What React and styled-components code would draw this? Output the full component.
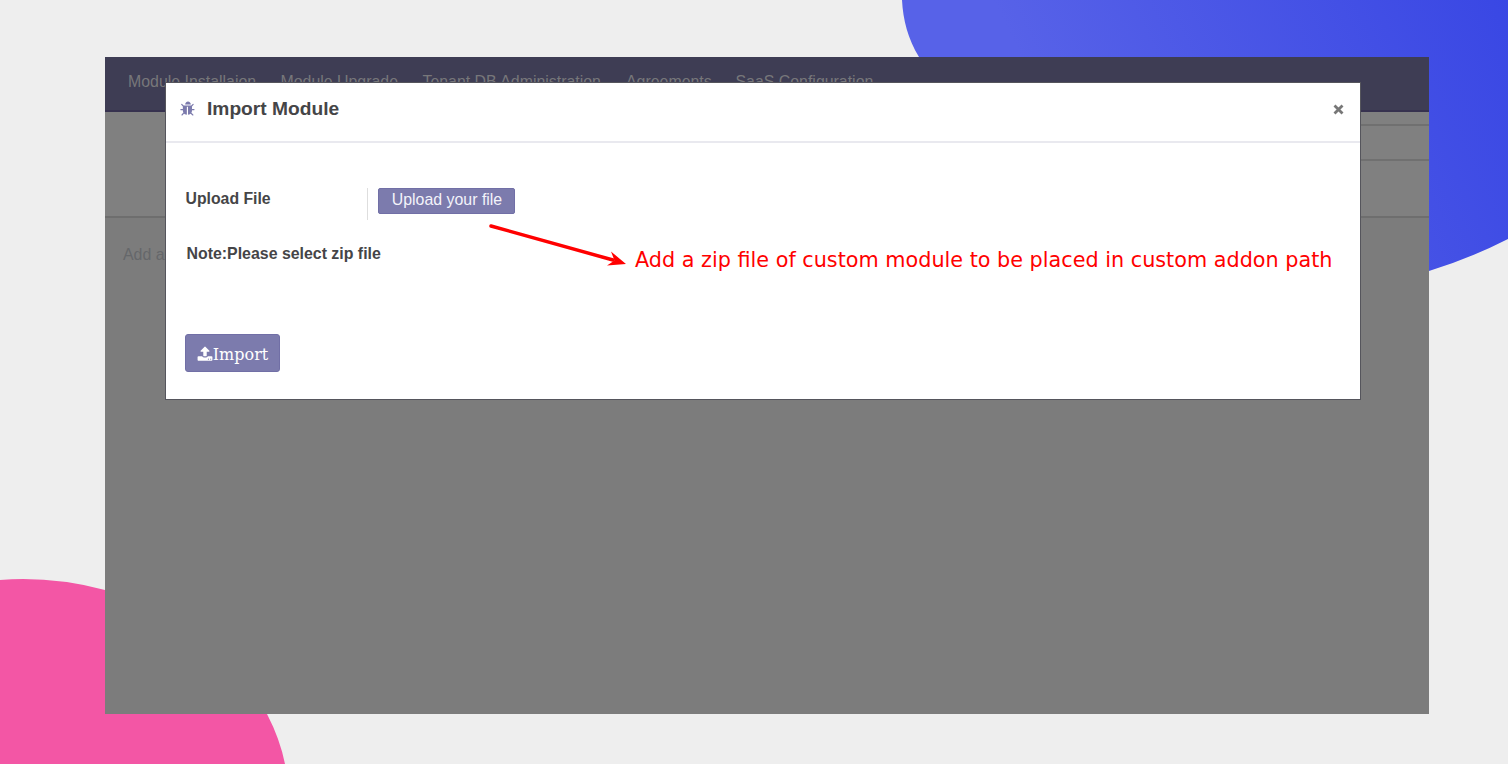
import React from 'react';
import styled, { createGlobalStyle } from 'styled-components';

const Global = createGlobalStyle`
  * { box-sizing: border-box; }
  body { margin: 0; overflow: hidden; }
`;

const Page = styled.div`
  position: relative;
  width: 1508px;
  height: 764px;
  padding: 57px 79.5px 50px 105px;
  background: #eeeeee;
  overflow: hidden;
  font-family: 'Liberation Sans', Arial, sans-serif;
`;

const Shapes = styled.svg`
  position: absolute;
  inset: 0;
`;

const Screen = styled.div`
  position: relative;
  height: 657px;
  background: #7c7c7c;
  overflow: hidden;
`;

const NavBar = styled.nav`
  display: flex;
  gap: 24px;
  height: 55px;
  padding: 16px 23px 0;
  background: #3e3d54;
  border-bottom: 2px solid #37324f;
  color: #77777a;
  font-size: 15.9px;
  line-height: 18px;
  white-space: nowrap;
`;

const NavItem = styled.span`
  width: ${(p) => p.$width}px;
`;

const ControlPanel = styled.div`
  height: 106px;
  background: #808080;
  border-bottom: 2px solid #6e6e6e;
`;

const Strip = styled.div`
  height: ${(p) => p.$height}px;
  margin-left: 61px;
  border-bottom: 2px solid #707070;
`;

const AddHint = styled.div`
  padding: 28px 18px;
  color: #65676a;
  font-size: 15.9px;
  line-height: 18px;
`;

const Dialog = styled.section`
  position: absolute;
  top: 25px;
  left: 60px;
  width: 1196px;
  height: 318px;
  background: #fff;
  border: 1px solid #55555c;
  color: #454547;
`;

const DialogHeader = styled.header`
  display: flex;
  align-items: center;
  height: 60px;
  padding: 0 16px 6px 14px;
  border-bottom: 2px solid #e9e9ef;
`;

const Title = styled.h1`
  flex: 1;
  margin: 0 0 0 11px;
  font-size: 19.2px;
  line-height: 24px;
`;

const Field = styled.div`
  display: flex;
  height: 32px;
  margin: 45px 0 0 19.5px;
`;

const Label = styled.label`
  width: 182.5px;
  border-right: 1.5px solid #dedede;
  font-size: 15.8px;
  font-weight: 700;
  line-height: 21px;
`;

const UploadButton = styled.button`
  width: 137px;
  height: 26px;
  margin-left: 10px;
  padding: 0 0 2px 1px;
  border: 1px solid #716fa6;
  border-radius: 2px;
  background: #7c7bad;
  color: #f3f3fa;
  font: 15.9px 'Liberation Sans', Arial, sans-serif;
`;

const Note = styled.p`
  margin: 25px 0 0 20.5px;
  font-size: 15.9px;
  font-weight: 700;
  line-height: 18px;
`;

const ImportButton = styled.button`
  display: flex;
  align-items: center;
  justify-content: center;
  width: 95px;
  height: 38px;
  margin: 71px 0 0 19px;
  padding: 2px 0 0;
  border: 1px solid #716fa6;
  border-radius: 3px;
  background: #7c7bad;
  color: #fff;
  font: 16px 'DejaVu Serif', serif;
`;

const Arrow = styled.svg`
  position: absolute;
  top: 139px;
  left: 321px;
`;

const Callout = styled.div`
  position: absolute;
  top: 163px;
  left: 469px;
  color: #ff0000;
  font-family: 'DejaVu Sans', sans-serif;
  font-size: 20.75px;
  line-height: 28px;
  white-space: nowrap;
`;

const BugIcon = () => (
  <svg width="16" height="16" viewBox="0 0 1792 1792" fill="#7c7bad">
    <path d="M1632 960q0 26-19 45t-45 19h-224q0 171-67 290l208 209q19 19 19 45t-19 45q-18 19-45 19t-45-19l-198-197q-5 5-15 13t-42 28.500-65 36.500-82 29-97 13v-896h-128v896q-51 0-101.500-13.500t-87-33-66-39-43.500-32.500l-15-14-183 207q-20 21-48 21-24 0-43-16-19-18-20.500-44.500t15.500-46.500l202-227q-58-114-58-274h-224q-26 0-45-19t-19-45 19-45 45-19h224v-294l-173-173q-19-19-19-45t19-45 45-19 45 19l173 173h844l173-173q19-19 45-19t45 19 19 45-19 45l-173 173v294h224q26 0 45 19t19 45zm-416-576h-640q0-133 93.500-226.500t226.500-93.500 226.500 93.500 93.500 226.500z" />
  </svg>
);

const UploadIcon = () => (
  <svg width="16" height="16" viewBox="0 0 1792 1792" fill="#fff">
    <path d="M1344 1472q0-26-19-45t-45-19-45 19-19 45 19 45 45 19 45-19 19-45zm256 0q0-26-19-45t-45-19-45 19-19 45 19 45 45 19 45-19 19-45zm128-224v320q0 40-28 68t-68 28h-1472q-40 0-68-28t-28-68v-320q0-40 28-68t68-28h427q21 56 70.500 92t110.500 36h256q61 0 110.500-36t70.500-92h427q40 0 68 28t28 68zm-325-648q-17 40-59 40h-256v448q0 26-19 45t-45 19h-256q-26 0-45-19t-19-45v-448h-256q-42 0-59-40-17-39 14-69l448-448q18-19 45-19t45 19l448 448q31 30 14 69z" />
  </svg>
);

export default function App() {
  return (
    <Page>
      <Global />
      <Shapes width="1508" height="764">
        <defs>
          <linearGradient id="blue" gradientUnits="userSpaceOnUse" x1="1060" y1="140" x2="1480" y2="-60">
            <stop offset="0" stopColor="#5762e8" />
            <stop offset="1" stopColor="#3947e4" />
          </linearGradient>
        </defs>
        <path d="M902 0C903 20 908 39 919 57C990 200 1230 330 1429 271Q1471 258 1508 239V0Z" fill="url(#blue)" />
        <path d="M0 580Q52 576 105 590C180 606 235 653 267 714Q280 739 285 764H0Z" fill="#f356a5" />
      </Shapes>
      <Screen>
        <NavBar>
          <NavItem $width={128.5}>Module Installaion</NavItem>
          <NavItem $width={118}>Module Upgrade</NavItem>
          <NavItem $width={179.5}>Tenant DB Administration</NavItem>
          <NavItem $width={85.5}>Agreements</NavItem>
          <NavItem $width={138}>SaaS Configuration</NavItem>
        </NavBar>
        <ControlPanel>
          <Strip $height={14} />
          <Strip $height={35} />
        </ControlPanel>
        <AddHint>Add a</AddHint>
        <Dialog>
          <DialogHeader>
            <BugIcon />
            <Title>Import Module</Title>
            <svg width="11" height="11" viewBox="0 0 11 11">
              <path d="M1.500 1.500L9.500 9.500M9.500 1.500L1.500 9.500" stroke="#777" strokeWidth="2.800" />
            </svg>
          </DialogHeader>
          <Field>
            <Label>Upload File</Label>
            <UploadButton>Upload your file</UploadButton>
          </Field>
          <Note>Note:Please select zip file</Note>
          <ImportButton><UploadIcon />Import</ImportButton>
          <Arrow width="145" height="48">
            <path d="M4 4L126 38" stroke="#f00" strokeWidth="3.500" strokeLinecap="round" />
            <path d="M139 42L124 29.500L127.500 38.500L120 43.500Z" fill="#f00" />
          </Arrow>
          <Callout>Add a zip file of custom module to be placed in custom addon path</Callout>
        </Dialog>
      </Screen>
    </Page>
  );
}
